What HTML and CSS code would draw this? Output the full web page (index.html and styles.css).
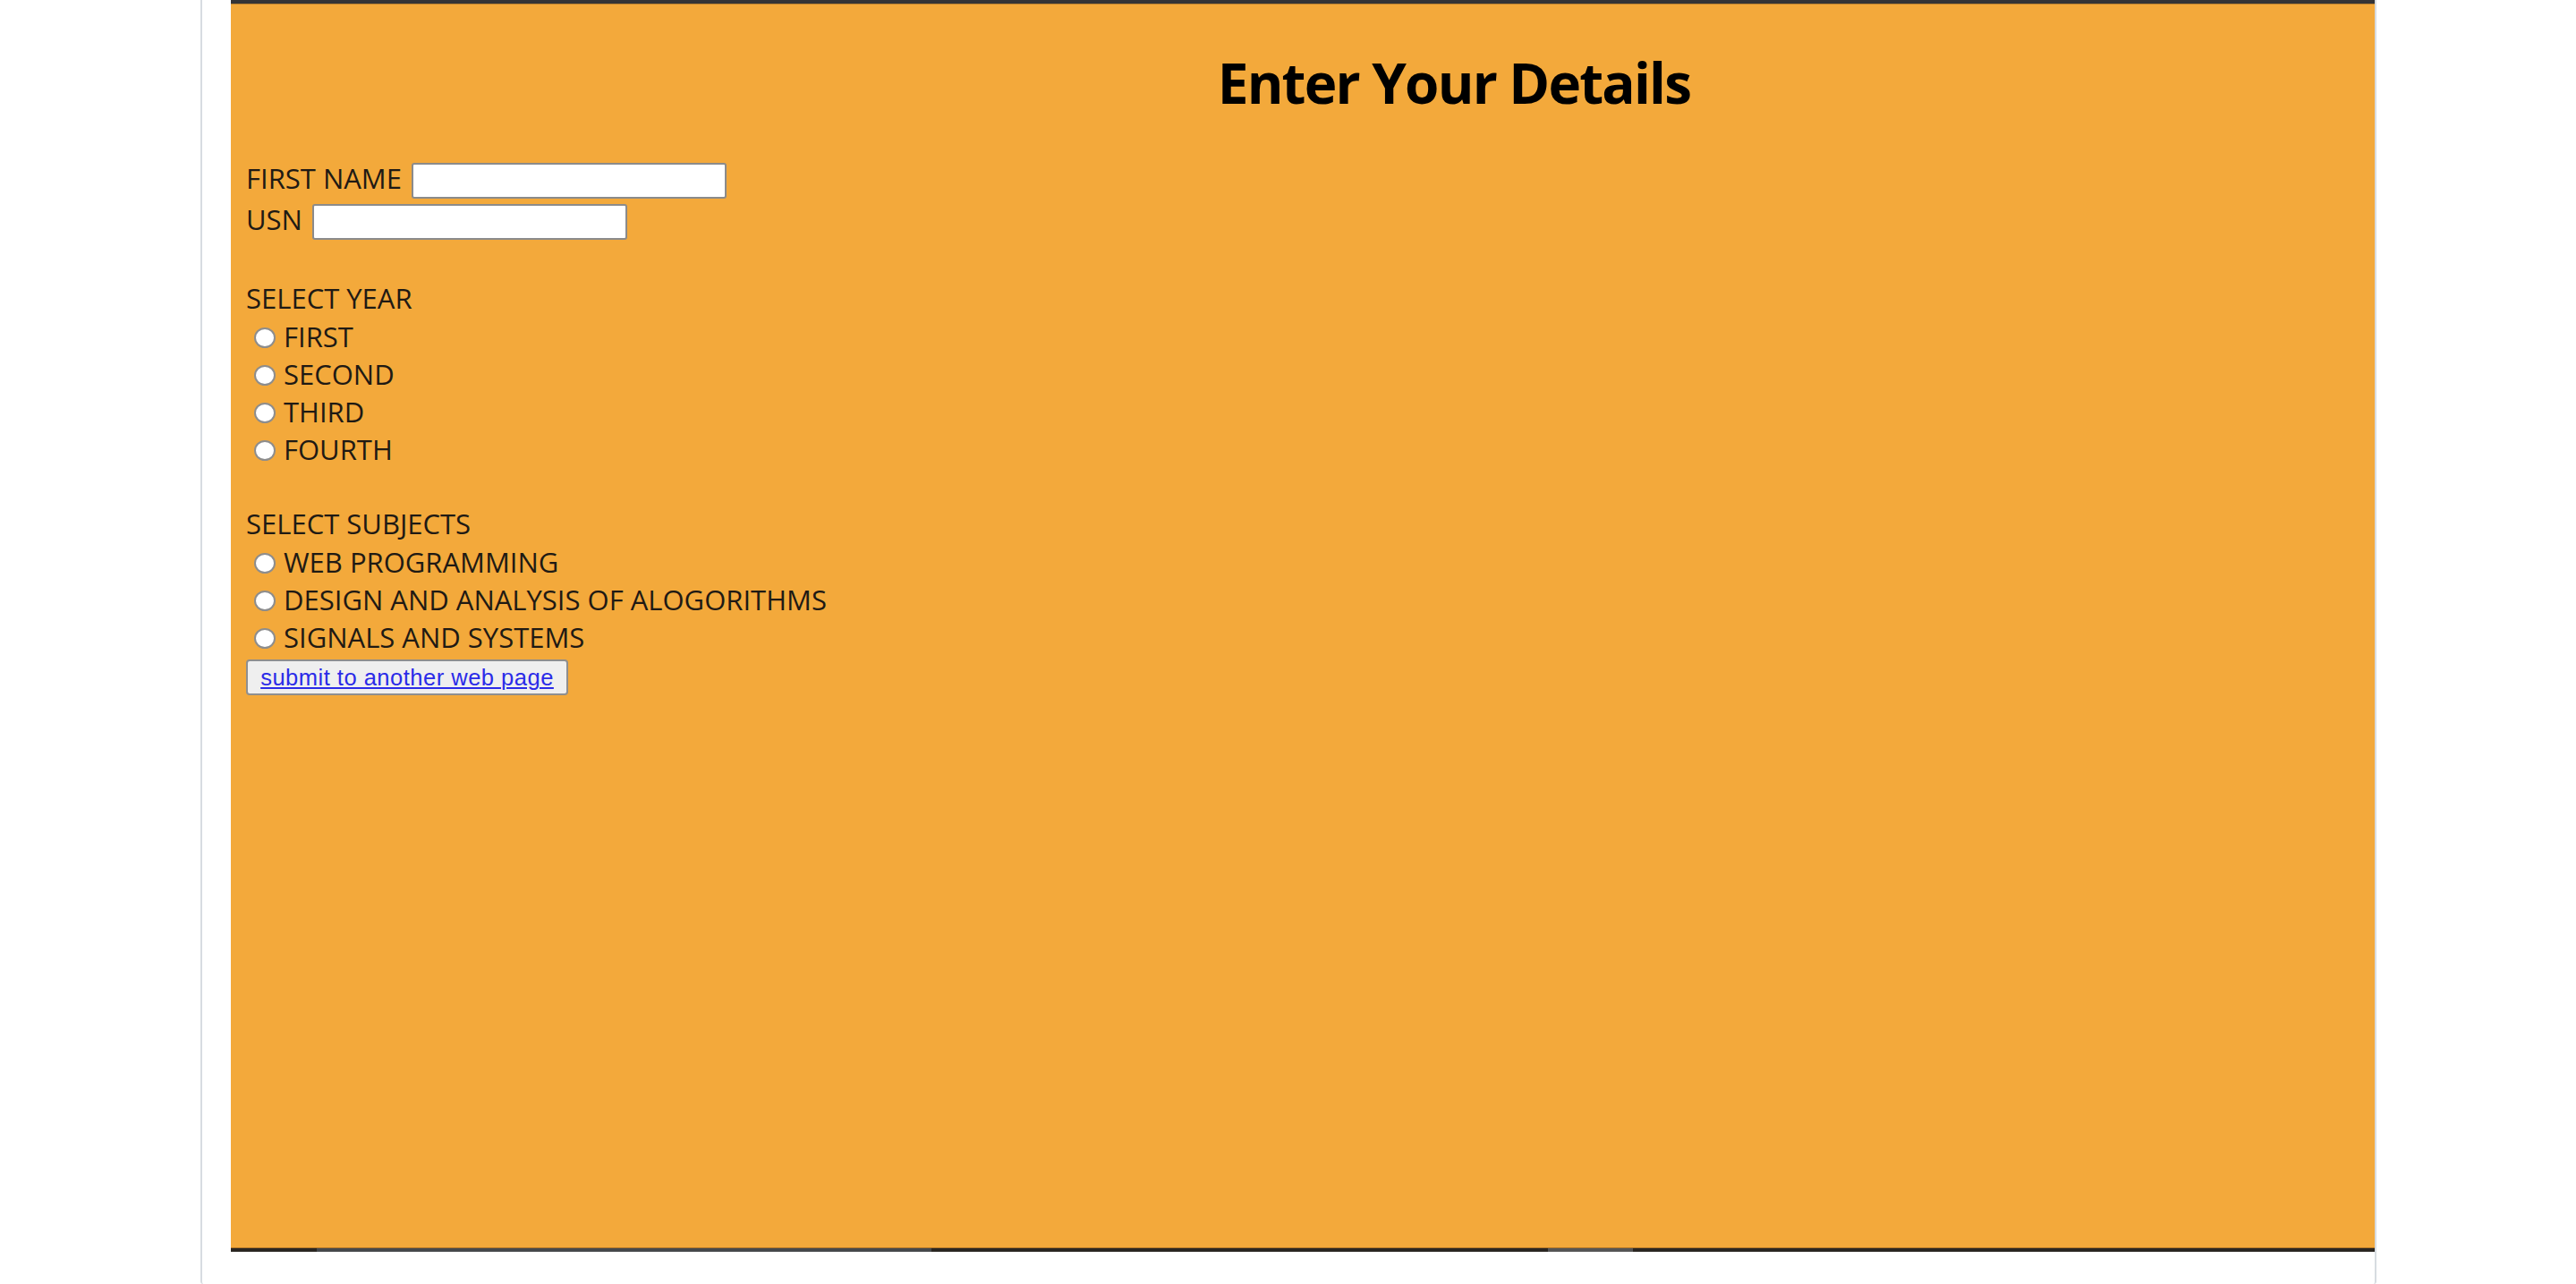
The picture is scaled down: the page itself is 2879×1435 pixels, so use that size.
FILE: index.html
```html
<!DOCTYPE html>
<html lang="en">
<head>
<meta charset="utf-8">
<title>Enter Your Details</title>
<link rel="stylesheet" href="styles.css">
</head>
<body>
<div class="frame">
  <div class="panel">
    <div class="topbar"></div>
    <main class="content">
      <h1 class="title">Enter Your Details</h1>
      <form class="form" action="#">
        <div class="field-row">
          <label class="label" for="fname">FIRST NAME</label>
          <input class="text-input" type="text" id="fname" name="fname">
        </div>
        <div class="field-row">
          <label class="label" for="usn">USN</label>
          <input class="text-input" type="text" id="usn" name="usn">
        </div>
        <div class="blank-line"></div>
        <div class="line">SELECT YEAR</div>
        <label class="radio-row"><input class="radio" type="radio" name="year" value="1"><span>FIRST</span></label>
        <label class="radio-row"><input class="radio" type="radio" name="year" value="2"><span>SECOND</span></label>
        <label class="radio-row"><input class="radio" type="radio" name="year" value="3"><span>THIRD</span></label>
        <label class="radio-row"><input class="radio" type="radio" name="year" value="4"><span>FOURTH</span></label>
        <div class="blank-line blank-short"></div>
        <div class="line">SELECT SUBJECTS</div>
        <label class="radio-row"><input class="radio" type="radio" name="subject" value="wp"><span>WEB PROGRAMMING</span></label>
        <label class="radio-row"><input class="radio" type="radio" name="subject" value="daa"><span>DESIGN AND ANALYSIS OF ALOGORITHMS</span></label>
        <label class="radio-row"><input class="radio" type="radio" name="subject" value="ss"><span>SIGNALS AND SYSTEMS</span></label>
        <div class="button-row">
          <button class="submit-btn" type="button"><a class="submit-link" href="#">submit to another web page</a></button>
        </div>
      </form>
    </main>
    <div class="bottombar">
      <span class="seg seg-a"></span>
      <span class="seg seg-b"></span>
      <span class="seg seg-c"></span>
      <span class="seg seg-d"></span>
      <span class="seg seg-e"></span>
    </div>
  </div>
</div>
</body>
</html>
```

FILE: styles.css
```css
html, body {
  margin: 0;
  padding: 0;
  background: #ffffff;
}

body {
  font-family: "Open Sans", "Noto Sans", sans-serif;
  color: #1f1a14;
}

.frame {
  box-sizing: border-box;
  margin-left: 224px;
  width: 2432px;
  height: 1435px;
  border-left: 2px solid #d7dce1;
  border-right: 2px solid #d7dce1;
  border-bottom-left-radius: 3px;
  border-bottom-right-radius: 3px;
  padding-left: 32px;
}

.panel {
  width: 2396px;
  height: 1399px;
  background: #f3a93b;
  display: flex;
  flex-direction: column;
}

.topbar {
  height: 4px;
  background: #343436;
  border-bottom: 1px solid #b9802f;
}

.content {
  flex: 1;
  padding-left: 17px;
}

.title {
  margin: 47px 0 46px 0;
  padding-left: 321px;
  text-align: center;
  font-family: "Open Sans", "Noto Sans", sans-serif;
  font-weight: 700;
  font-size: 62px;
  line-height: 80px;
  color: #000000;
  letter-spacing: -1.8px;
}

.form {
  font-size: 31px;
  line-height: 42.3px;
}

.field-row {
  height: 46px;
  display: flex;
  align-items: flex-start;
  gap: 11px;
}

.label {
  line-height: 42.3px;
}

.text-input {
  box-sizing: border-box;
  margin: 4px 0 0 0;
  width: 352px;
  height: 40px;
  border: 2px solid #8b8b8b;
  border-radius: 3px;
  background: #ffffff;
  padding: 0 4px;
  font-size: 24px;
}

.blank-line {
  height: 42.3px;
}

.blank-short {
  height: 40.5px;
}

.line {
  height: 42.3px;
}

.radio-row {
  display: flex;
  align-items: flex-start;
  height: 42.3px;
}

.radio {
  appearance: none;
  -webkit-appearance: none;
  box-sizing: border-box;
  width: 24px;
  height: 23px;
  margin: 11px 9px 0 9px;
  border: 2px solid #8d8d8d;
  border-radius: 50%;
  background: #ffffff;
  flex: none;
}

.button-row {
  padding-top: 0;
}

.submit-btn {
  box-sizing: border-box;
  width: 360px;
  height: 40px;
  padding: 0;
  background: #efefef;
  border: 2px solid #8f8f8f;
  border-radius: 4px;
  font-family: "Liberation Sans", Arial, sans-serif;
  font-size: 25.5px;
  letter-spacing: 0.5px;
  line-height: 36px;
  text-align: center;
}

.submit-link {
  color: #2b2be8;
  text-decoration: underline;
  text-decoration-thickness: 2px;
  text-underline-offset: 2px;
}

.bottombar {
  height: 4px;
  border-top: 1px solid #b87a28;
  display: flex;
}

.seg {
  display: block;
  height: 4px;
  background: #2a2621;
}

.seg-a { width: 96px; }
.seg-b { width: 687px; background: #46484b; }
.seg-c { width: 689px; }
.seg-d { width: 95px; background: #555555; }
.seg-e { flex: 1; }
```
